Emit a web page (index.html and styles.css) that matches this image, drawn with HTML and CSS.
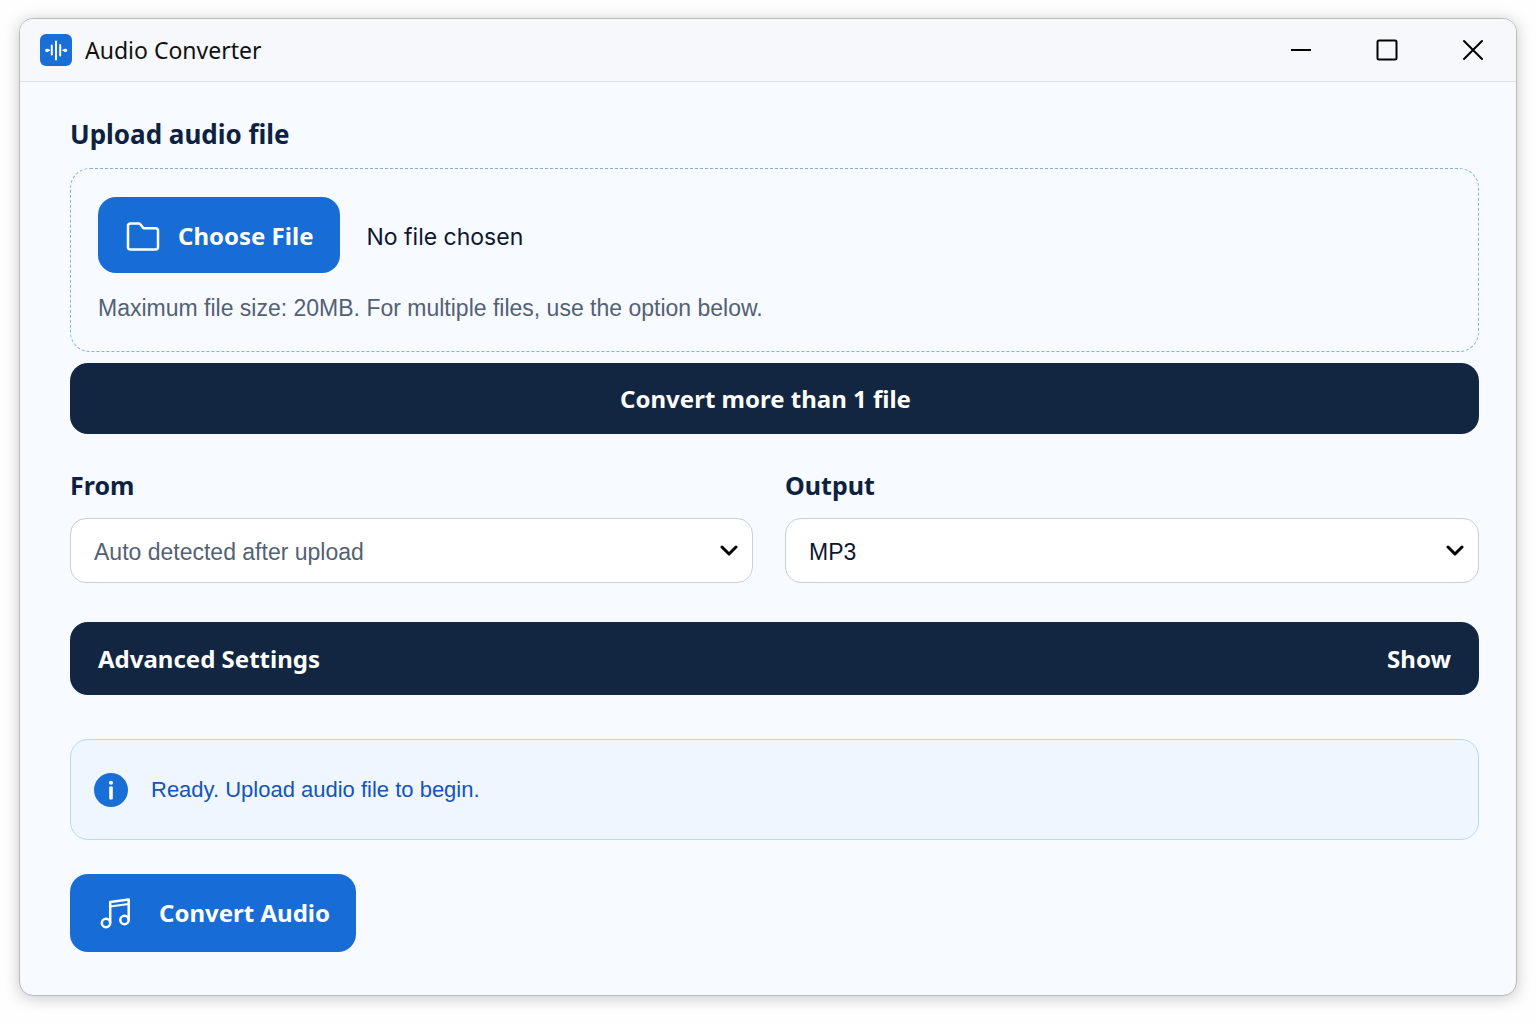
FILE: index.html
```html
<!DOCTYPE html>
<html lang="en">
<head>
<meta charset="utf-8">
<meta name="viewport" content="width=device-width, initial-scale=1">
<title>Audio Converter</title>
<link rel="stylesheet" href="styles.css">
</head>
<body>
<div class="window">
  <header class="titlebar">
    <svg class="app-icon" viewBox="0 0 32 32" aria-hidden="true">
      <rect width="32" height="32" rx="6" fill="#1a6fd6"/>
      <g stroke="#fff" stroke-width="2" stroke-linecap="round">
        <path d="M11.800 11.500v9M16 7.500v18M20.200 11v10.500"/>
        <path d="M6.700 16.300h.8M25 16.300h.8" stroke-width="3.200"/>
        <path d="M7 16.300h2.500M23 16.300h2.500" stroke-width="1.400"/>
      </g>
    </svg>
    <h1 class="title">Audio Converter</h1>
    <div class="controls">
      <button class="control" type="button" aria-label="Minimize">
        <svg viewBox="0 0 24 24"><path d="M2 12h20" stroke-width="2"/></svg>
      </button>
      <button class="control" type="button" aria-label="Maximize">
        <svg viewBox="0 0 24 24"><rect x="2.500" y="2.500" width="19" height="19" rx="1.500" stroke-width="2"/></svg>
      </button>
      <button class="control" type="button" aria-label="Close">
        <svg viewBox="0 0 24 24"><path d="M3 3l18 18M21 3L3 21" stroke-width="2" stroke-linecap="round"/></svg>
      </button>
    </div>
  </header>

  <main class="content">
    <label class="label" for="audio-file">Upload audio file</label>
    <div class="dropzone">
      <div class="picker">
        <input id="audio-file" type="file" accept="audio/*" hidden>
        <button class="primary choose" type="button" onclick="document.getElementById('audio-file').click()">
          <svg class="folder" viewBox="0 0 34 30" aria-hidden="true"><path d="M4.500 2.500h8q1.200 0 2 1l3 3.700H29.500q2.500 0 2.500 2.500V26q0 2.500-2.500 2.500h-25Q2 28.500 2 26v-21Q2 2.500 4.500 2.500z"/></svg>
          Choose File
        </button>
        <span class="filename">No file chosen</span>
      </div>
      <p class="hint">Maximum file size: 20MB. For multiple files, use the option below.</p>
    </div>
    <button class="dark multiple" type="button">Convert more than 1 file</button>

    <div class="formats">
      <div class="field">
        <label class="label" for="from">From</label>
        <div class="select">
          <select id="from" class="muted"><option>Auto detected after upload</option></select>
          <svg class="chevron" viewBox="0 0 18 12" aria-hidden="true"><path d="M2 2l7 7 7-7"/></svg>
        </div>
      </div>
      <div class="field">
        <label class="label" for="output">Output</label>
        <div class="select">
          <select id="output"><option>MP3</option></select>
          <svg class="chevron" viewBox="0 0 18 12" aria-hidden="true"><path d="M2 2l7 7 7-7"/></svg>
        </div>
      </div>
    </div>

    <button class="dark advanced" type="button" aria-expanded="false">
      <span>Advanced Settings</span><span>Show</span>
    </button>

    <div class="status" role="status">
      <svg class="info" viewBox="0 0 34 34" aria-hidden="true">
        <circle cx="17" cy="17" r="17" fill="#1a6fd6"/>
        <circle cx="17" cy="9.700" r="2" fill="#fff"/>
        <rect x="15.200" y="13.500" width="3.600" height="13" rx="1" fill="#fff"/>
      </svg>
      <span>Ready. Upload audio file to begin.</span>
    </div>

    <button class="primary convert" type="button">
      <svg class="note" viewBox="0 0 32 32" aria-hidden="true">
        <circle cx="6" cy="26" r="4.200"/>
        <circle cx="24.500" cy="23" r="4.200"/>
        <path d="M10.200 26V5L28.700 2.500v20.500"/>
        <path d="M10.200 9.500L28.700 7" stroke-width="1.800"/>
      </svg>
      Convert Audio
    </button>
  </main>
</div>
</body>
</html>
```
FILE: styles.css
```css
* {
  box-sizing: border-box;
}

body {
  margin: 0;
  padding: 18px 19px 28px;
  background: #fefefe;
  color: #0d1730;
  font-family: "Liberation Sans", Arial, sans-serif;
  font-size: 23px;
  line-height: 32px;
}

button,
select {
  margin: 0;
  border: 0;
  font: inherit;
  cursor: pointer;
}

.window {
  overflow: hidden;
  border: 1px solid #b8babe;
  border-radius: 14px;
  background: #f7faff;
  box-shadow: 0 2px 16px rgba(0, 0, 0, 0.22);
}

.titlebar {
  display: flex;
  align-items: center;
  height: 63px;
  padding: 0 23px 0 20px;
  border-bottom: 1px solid #d8e0ea;
  background: #f6f8fb;
}

.app-icon {
  width: 32px;
  height: 32px;
}

.title {
  margin: 0 0 0 13px;
  color: #111;
  font-family: "Noto Sans", "Open Sans", sans-serif;
  font-size: 23px;
  font-weight: 400;
}

.controls {
  display: flex;
  gap: 46px;
  margin-left: auto;
}

.control {
  display: flex;
  align-items: center;
  justify-content: center;
  width: 40px;
  height: 40px;
  padding: 0;
  background: none;
}

.control svg {
  width: 24px;
  height: 24px;
  fill: none;
  stroke: #000;
}

.content {
  padding: 36px 37px 43px 50px;
}

.label {
  display: block;
  margin-bottom: 18px;
  color: #0c2240;
  font-family: "Noto Sans", "Open Sans", sans-serif;
  font-size: 26px;
  font-weight: 700;
}

.field .label {
  margin-bottom: 17px;
  font-size: 25px;
}

.dropzone {
  padding: 28px 27px 27px;
  border: 1px dashed #7fb2ea;
  border-radius: 20px;
}

.picker {
  display: flex;
  align-items: center;
  gap: 26px;
}

.primary,
.dark {
  display: flex;
  align-items: center;
  border-radius: 18px;
  color: #fff;
  font-family: "Noto Sans", "Open Sans", sans-serif;
  font-size: 24px;
  font-weight: 700;
}

.primary {
  background: #186cd5;
}

.dark {
  width: 100%;
  background: #122642;
}

.choose {
  gap: 18px;
  height: 76px;
  padding: 2px 27px 0 28px;
}

.folder {
  width: 34px;
  height: 30px;
  fill: none;
  stroke: #fff;
  stroke-width: 2.5;
  stroke-linejoin: round;
}

.filename {
  padding-top: 4px;
  font-family: Inter, "Liberation Sans", sans-serif;
}

.hint {
  margin: 19px 0 0;
  color: #536174;
}

.multiple {
  justify-content: center;
  height: 71px;
  margin-top: 11px;
  padding: 0 18px 0 0;
}

.formats {
  display: grid;
  grid-template-columns: 683fr 694fr;
  gap: 32px;
  margin-top: 35px;
}

.select {
  display: grid;
  align-items: center;
}

.select > * {
  grid-area: 1 / 1;
}

.select select {
  width: 100%;
  height: 65px;
  padding: 2px 48px 0 23px;
  border: 1px solid #c9cfd8;
  border-radius: 16px;
  background: #fff;
  color: #0d1730;
  appearance: none;
}

.select .muted {
  color: #536174;
}

.chevron {
  justify-self: end;
  width: 18px;
  height: 12px;
  margin-right: 15px;
  fill: none;
  stroke: #000;
  stroke-width: 3;
  stroke-linecap: round;
  stroke-linejoin: round;
  pointer-events: none;
}

.advanced {
  justify-content: space-between;
  height: 73px;
  margin-top: 39px;
  padding: 0 28px;
}

.status {
  display: flex;
  align-items: center;
  gap: 23px;
  height: 101px;
  margin-top: 44px;
  padding: 0 23px;
  border: 1px solid #b9d7f5;
  border-radius: 18px;
  background: #eff6ff;
  color: #1554b8;
  font-size: 22px;
}

.info {
  width: 34px;
  height: 34px;
}

.convert {
  gap: 27px;
  height: 78px;
  margin-top: 34px;
  padding: 0 26px 0 30px;
}

.note {
  width: 32px;
  height: 32px;
  fill: none;
  stroke: #fff;
  stroke-width: 2.5;
  stroke-linejoin: round;
}
```
